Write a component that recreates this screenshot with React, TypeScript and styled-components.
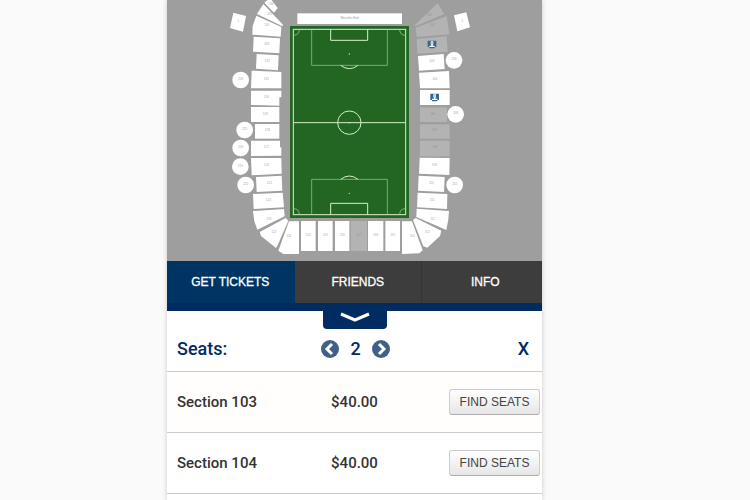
import React, { useState } from "react";
import styled, { createGlobalStyle } from "styled-components";

const GlobalStyle = createGlobalStyle`
  *, *::before, *::after { box-sizing: border-box; }
  body {
    margin: 0;
    background: #fafafa;
    font-family: Roboto, "Noto Sans", sans-serif;
    overflow: hidden;
  }
`;

const Page = styled.div`
  display: grid;
  grid-template-columns: 167fr 375fr 208fr;
  min-height: 100vh;
`;

const Panel = styled.main`
  grid-column: 2;
  background: #ffffff;
  box-shadow: 0 0 5px rgba(0, 0, 0, 0.2);
`;

const MapSvg = styled.svg`
  display: block;
  width: 100%;
  background: #9e9e9e;
  font-family: "Liberation Sans", Arial, sans-serif;
  font-size: 9px;
  text-anchor: middle;
`;

const Tabs = styled.nav`
  display: grid;
  grid-template-columns: repeat(3, 34%);
  height: 42px;
  overflow: hidden;
  background: #3d3d3d;
`;

const Tab = styled.button<{ $active: boolean }>`
  border: 0;
  border-right: 1px solid ${(p) => (p.$active ? "#003462" : "#343434")};
  background: ${(p) => (p.$active ? "#003462" : "#3d3d3d")};
  color: #ffffff;
  font: 12px "Liberation Sans", Arial, sans-serif;
  -webkit-text-stroke: 0.3px #ffffff;
  padding: 0;
  cursor: pointer;
`;

const Divider = styled.div`
  height: 8px;
  background: #002c62;
`;

const Collapse = styled.button`
  display: flex;
  align-items: center;
  justify-content: center;
  width: 64px;
  height: 18px;
  margin: 0 auto;
  padding: 0 0 6px;
  border: 0;
  border-radius: 0 0 4px 4px;
  background: #002c62;
  cursor: pointer;
`;

const SeatBar = styled.div`
  display: grid;
  grid-template-columns: repeat(3, 1fr);
  align-items: center;
  height: 43px;
  padding: 0 8px 2px 10px;
  border-bottom: 1px solid #cccccc;
  color: #002c62;
  font-size: 18px;
  font-weight: 500;
  line-height: 24px;
`;

const Stepper = styled.div`
  display: flex;
  align-items: center;
  justify-content: center;
  gap: 11px;
`;

const PlainButton = styled.button`
  display: flex;
  padding: 0;
  border: 0;
  background: none;
  color: inherit;
  font: inherit;
  cursor: pointer;
`;

const CloseButton = styled(PlainButton)`
  justify-self: end;
  margin-right: 5px;
`;

const Listing = styled.table`
  width: 100%;
  table-layout: fixed;
  border-collapse: separate;
  border-spacing: 0;
  color: #333333;
  font-size: 15px;
  line-height: 20px;
`;

const Row = styled.tr`
  height: 61px;
  &:nth-child(odd) { background: #fffefc; }
`;

const Cell = styled.td<{ $align: "left" | "center" | "right" }>`
  padding: 0 ${(p) => (p.$align === "right" ? "2px" : "0")} 0
    ${(p) => (p.$align === "left" ? "10px" : "0")};
  border-bottom: 1px solid #cccccc;
  text-align: ${(p) => p.$align};
  font-weight: 500;
  white-space: nowrap;
`;

const FindButton = styled.button`
  width: 91px;
  height: 26px;
  padding: 0;
  border: 1px solid #cccccc;
  border-bottom-color: #adadad;
  border-radius: 3px;
  background: linear-gradient(#ffffff, #e6e6e6);
  color: #444444;
  font: 12px "Liberation Sans", Arial, sans-serif;
  vertical-align: middle;
  cursor: pointer;
`;

type Block = { id: string; pts: string; x: number; y: number; off?: boolean; mark?: boolean };

const leftTop: Block[] = [
  { id: "136", pts: "133,8 150,-6 173,24 162,38", x: 153, y: 15 },
  { id: "135", pts: "111,42 130,12 189,74 187,79", x: 149, y: 45 },
  { id: "134", pts: "109,47 184,81 182,110 97,104 98,78", x: 140, y: 78 },
  { id: "133", pts: "101,110 180,115 178,160 99,155", x: 140, y: 135 },
  { id: "132", pts: "110,162 176,166 174,211 108,206", x: 142, y: 187 },
  { id: "131", pts: "95,212 184,216 184,265 93,265", x: 139, y: 239 },
  { id: "130", pts: "93,272 184,272 184,292 178,292 178,317 93,315", x: 139, y: 293 },
  { id: "129", pts: "93,321 178,321 178,366 93,366", x: 136, y: 344 },
  { id: "128", pts: "105,372 178,372 178,416 105,416", x: 142, y: 394 },
];

const leftBottom: Block[] = [
  { id: "127", pts: "93,32 180,32 180,52 184,52 184,77 93,78", x: 139, y: 53 },
  { id: "126", pts: "93,84 184,84 185,131 95,136", x: 139, y: 109 },
  { id: "125", pts: "108,141 185,137 187,182 110,186", x: 148, y: 161 },
  { id: "124", pts: "99,192 188,188 192,232 101,237", x: 145, y: 212 },
  { id: "123", pts: "99,243 192,237 194,259 112,299 103,274", x: 147, y: 269 },
  { id: "122", pts: "119,306 197,264 205,272 173,346 168,354 123,318", x: 162, y: 308 },
  { id: "121", pts: "207,274 237,274 237,372 190,372 175,362", x: 207, y: 321 },
];

const bottomRow: Block[] = [
  { id: "120", pts: "903,663 947,663 947,753 903,753", x: 925, y: 709 },
  { id: "119", pts: "954,663 998,663 998,753 954,753", x: 976, y: 709 },
  { id: "118", pts: "1005,663 1048,663 1048,753 1005,753", x: 1027, y: 709 },
  { id: "117", pts: "1052,663 1101,663 1101,753 1052,753", x: 1076, y: 709, off: true },
  { id: "116", pts: "1104,663 1150,663 1150,753 1104,753", x: 1127, y: 709 },
  { id: "115", pts: "1156,663 1200,663 1200,753 1156,753", x: 1178, y: 709 },
];

const rightTop: Block[] = [
  { id: "100", pts: "263,9 282,43 197,79 194,76", x: 238, y: 47, off: true },
  { id: "101", pts: "197,83 290,48 298,103 200,111", x: 247, y: 79, off: true },
  { id: "102", pts: "200,117 290,109 293,155 202,161", x: 246, y: 133, off: true, mark: true },
  { id: "103", pts: "204,168 281,162 284,207 207,212", x: 245, y: 187 },
  { id: "104", pts: "207,218 297,213 299,265 210,265", x: 254, y: 239 },
  { id: "105", pts: "210,270 299,270 299,315 210,315", x: 254, y: 292, mark: true },
  { id: "106", pts: "210,322 291,322 291,366 210,366", x: 248, y: 345, off: true },
  { id: "107", pts: "210,373 299,373 299,416 210,416", x: 254, y: 394, off: true },
];

const rightBottom: Block[] = [
  { id: "108", pts: "210,32 299,32 299,79 210,79", x: 254, y: 54, off: true },
  { id: "109", pts: "209,83 299,84 298,135 207,131", x: 253, y: 109 },
  { id: "110", pts: "206,137 284,141 282,186 204,182", x: 244, y: 161 },
  { id: "111", pts: "203,188 292,192 291,237 201,232", x: 247, y: 212 },
  { id: "112", pts: "200,236 297,243 295,268 289,300 199,261", x: 248, y: 269 },
  { id: "113", pts: "189,270 197,264 274,302 270,318 232,353 220,349", x: 232, y: 308 },
  { id: "114", pts: "156,274 186,274 218,361 208,370 156,372", x: 187, y: 321 },
];

const suites = [
  { id: "226", x: 722, y: 240 },
  { id: "225", x: 734, y: 390 },
  { id: "224", x: 722, y: 444 },
  { id: "223", x: 721, y: 500 },
  { id: "222", x: 737, y: 555 },
  { id: "203", x: 1362, y: 181 },
  { id: "206", x: 1367, y: 343 },
  { id: "210", x: 1364, y: 555 },
];

function Blocks({ items, dx = 0, dy = 0 }: { items: Block[]; dx?: number; dy?: number }) {
  return (
    <g transform={`translate(${dx} ${dy})`}>
      {items.map((b) => (
        <g key={b.id}>
          <polygon points={b.pts} fill={b.off ? "#b3b3b3" : "#ffffff"} />
          {b.mark ? (
            <g transform={`translate(${b.x} ${b.y})`}>
              <path d="M-13-11H13V8H8V12H-8V8H-13Z" fill="#356496" />
              <path d="M-4-9H4V-1L2 2V4H8V8H-8V4H-2V2L-4-1Z" fill="#ffffff" />
              <path d="M-2-6H2V-2H-2Z" fill="#7da3c8" />
            </g>
          ) : (
            <text x={b.x} y={b.y} fill={b.off ? "#949494" : "#a8a8a8"}>{b.id}</text>
          )}
        </g>
      ))}
    </g>
  );
}

function StadiumMap() {
  return (
    <MapSvg viewBox="501 0 1125 783" role="img" aria-label="Stadium seating map">
      <polygon points="700,38 738,48 729,95 690,84" fill="#fff" />
      <text x="715" y="67" fill="#a8a8a8">1</text>
      <polygon points="1362,46 1399,37 1410,82 1372,94" fill="#fff" />
      <text x="1387" y="66" fill="#a8a8a8">2</text>
      <rect x="892" y="40" width="314" height="32" fill="#fff" />
      <text x="1049" y="57" fill="#9a9a9a">Bleacher End</text>

      <rect x="870" y="78" width="357" height="576" fill="#226622" />
      <g fill="none" stroke="#d5f0c8" strokeWidth="3">
        <rect x="880" y="88" width="337" height="556" />
        <path d="M880 368H1217" />
        <circle cx="1048" cy="368" r="35" />
        <path d="M992 88V121H1103V88M992 644V610H1103V644" />
        <path d="M1022 196Q1048 216 1074 196M1022 538Q1048 518 1074 538" />
      </g>
      <g fill="none" stroke="#a9cfa0" strokeWidth="2">
        <path d="M880 106Q898 106 898 88M1199 88Q1199 106 1217 106M880 626Q898 626 898 644M1199 644Q1199 626 1217 626" />
        <path d="M935 88V196H1162V88M935 644V538H1162V644" />
      </g>
      <g fill="#d5f0c8">
        <circle cx="1048" cy="162" r="2" />
        <circle cx="1048" cy="368" r="2" />
        <circle cx="1048" cy="580" r="2" />
      </g>

      <Blocks items={leftTop} dx={660} />
      <Blocks items={leftBottom} dx={660} dy={390} />
      <Blocks items={bottomRow} />
      <Blocks items={rightTop} dx={1050} />
      <Blocks items={rightBottom} dx={1050} dy={390} />

      {suites.map((s) => (
        <g key={s.id}>
          <circle cx={s.x} cy={s.y} r="25" fill="#fff" />
          <text x={s.x} y={s.y} fill="#a8a8a8">{s.id}</text>
        </g>
      ))}
    </MapSvg>
  );
}

function ArrowIcon({ d }: { d: string }) {
  return (
    <svg width="18" height="18" viewBox="0 0 18 18" aria-hidden="true">
      <circle cx="9" cy="9" r="9" fill="#406089" />
      <path d={d} fill="none" stroke="#fff" strokeWidth="3" />
    </svg>
  );
}

const tabs = ["GET TICKETS", "FRIENDS", "INFO"];
const listings = [
  { section: "Section 103", price: "$40.00" },
  { section: "Section 104", price: "$40.00" },
];

export default function App() {
  const [active, setActive] = useState(tabs[0]);
  const [seats, setSeats] = useState(2);

  return (
    <Page>
      <GlobalStyle />
      <Panel>
        <StadiumMap />
        <Tabs>
          {tabs.map((t) => (
            <Tab key={t} $active={t === active} onClick={() => setActive(t)}>{t}</Tab>
          ))}
        </Tabs>
        <Divider />
        <Collapse aria-label="Collapse list">
          <svg width="30" height="10" viewBox="0 0 30 10" aria-hidden="true">
            <path d="M1 2L15 8L29 2" fill="none" stroke="#fff" strokeWidth="3" />
          </svg>
        </Collapse>
        <SeatBar>
          <span>Seats:</span>
          <Stepper>
            <PlainButton aria-label="Fewer seats" onClick={() => setSeats(Math.max(1, seats - 1))}>
              <ArrowIcon d="M11 4L6 9L11 14" />
            </PlainButton>
            <span>{seats}</span>
            <PlainButton aria-label="More seats" onClick={() => setSeats(seats + 1)}>
              <ArrowIcon d="M7 4L12 9L7 14" />
            </PlainButton>
          </Stepper>
          <CloseButton aria-label="Close">X</CloseButton>
        </SeatBar>
        <Listing>
          <tbody>
            {listings.map((l) => (
              <Row key={l.section}>
                <Cell $align="left">{l.section}</Cell>
                <Cell $align="center">{l.price}</Cell>
                <Cell $align="right"><FindButton>FIND SEATS</FindButton></Cell>
              </Row>
            ))}
          </tbody>
        </Listing>
      </Panel>
    </Page>
  );
}
